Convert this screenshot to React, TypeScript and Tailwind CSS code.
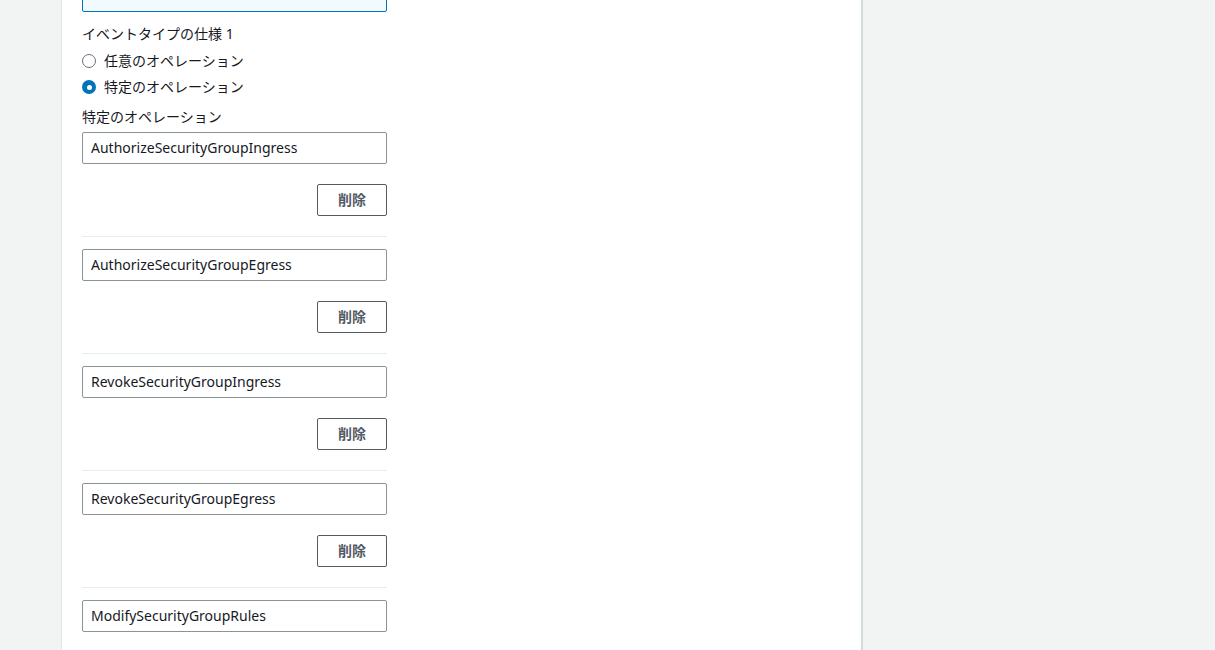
const operations = [
  "AuthorizeSecurityGroupIngress",
  "AuthorizeSecurityGroupEgress",
  "RevokeSecurityGroupIngress",
  "RevokeSecurityGroupEgress",
  "ModifySecurityGroupRules",
];

function Radio({ checked, label }: { checked?: boolean; label: string }) {
  return (
    <label className="flex items-center h-[26px] gap-[8px]">
      <span
        className={
          checked
            ? "w-[14px] h-[14px] rounded-full bg-[#0073bb] flex items-center justify-center"
            : "w-[14px] h-[14px] rounded-full border border-[#687078] bg-white"
        }
      >
        {checked && <span className="w-[5px] h-[5px] rounded-full bg-white" />}
      </span>
      <span>{label}</span>
    </label>
  );
}

/* ── Operation row: input + remove button + divider ─────────────────────── */
function OperationRow({ value, last }: { value: string; last?: boolean }) {
  return (
    <div className="flex flex-col">
      <div className="h-[32px] border border-[#879596] rounded-[2px] px-[8px] flex items-center bg-white">
        {value}
      </div>
      {!last && (
        <>
          <div className="flex justify-end mt-[20px]">
            <button className="w-[70px] h-[32px] border border-[#545b64] rounded-[2px] text-[#545b64] font-bold bg-white">
              削除
            </button>
          </div>
          <div className="h-px bg-[#eaeded] mt-[20px] mb-[12px]" />
        </>
      )}
    </div>
  );
}

export default function App() {
  return (
    <div
      className="h-[650px] w-full overflow-hidden flex bg-[#f2f3f3] text-[14px] leading-[22px] text-[#16191f]"
      style={{ fontFamily: '"Noto Sans", "Noto Sans CJK JP", sans-serif' }}
    >
      <div className="w-[61px] shrink-0" />
      <div className="w-[802px] shrink-0 bg-white border-l border-[#e4e7e7] border-r-2 border-r-[#d5dbdb] pl-[20px]">
        <div className="w-[305px] flex flex-col">
          <div className="-mt-[21px] h-[33px] border border-[#0073bb] rounded-[2px] bg-[#f1faff]" />
          <div className="mt-[11px]">イベントタイプの仕様 1</div>
          <div className="mt-[3px] flex flex-col">
            <Radio label="任意のオペレーション" />
            <Radio checked label="特定のオペレーション" />
          </div>
          <div className="mt-[6px]">特定のオペレーション</div>
          <div className="mt-[4px] flex flex-col">
            {operations.map((op, i) => (
              <OperationRow key={op} value={op} last={i === operations.length - 1} />
            ))}
          </div>
        </div>
      </div>
      <div className="flex-1" />
    </div>
  );
}
